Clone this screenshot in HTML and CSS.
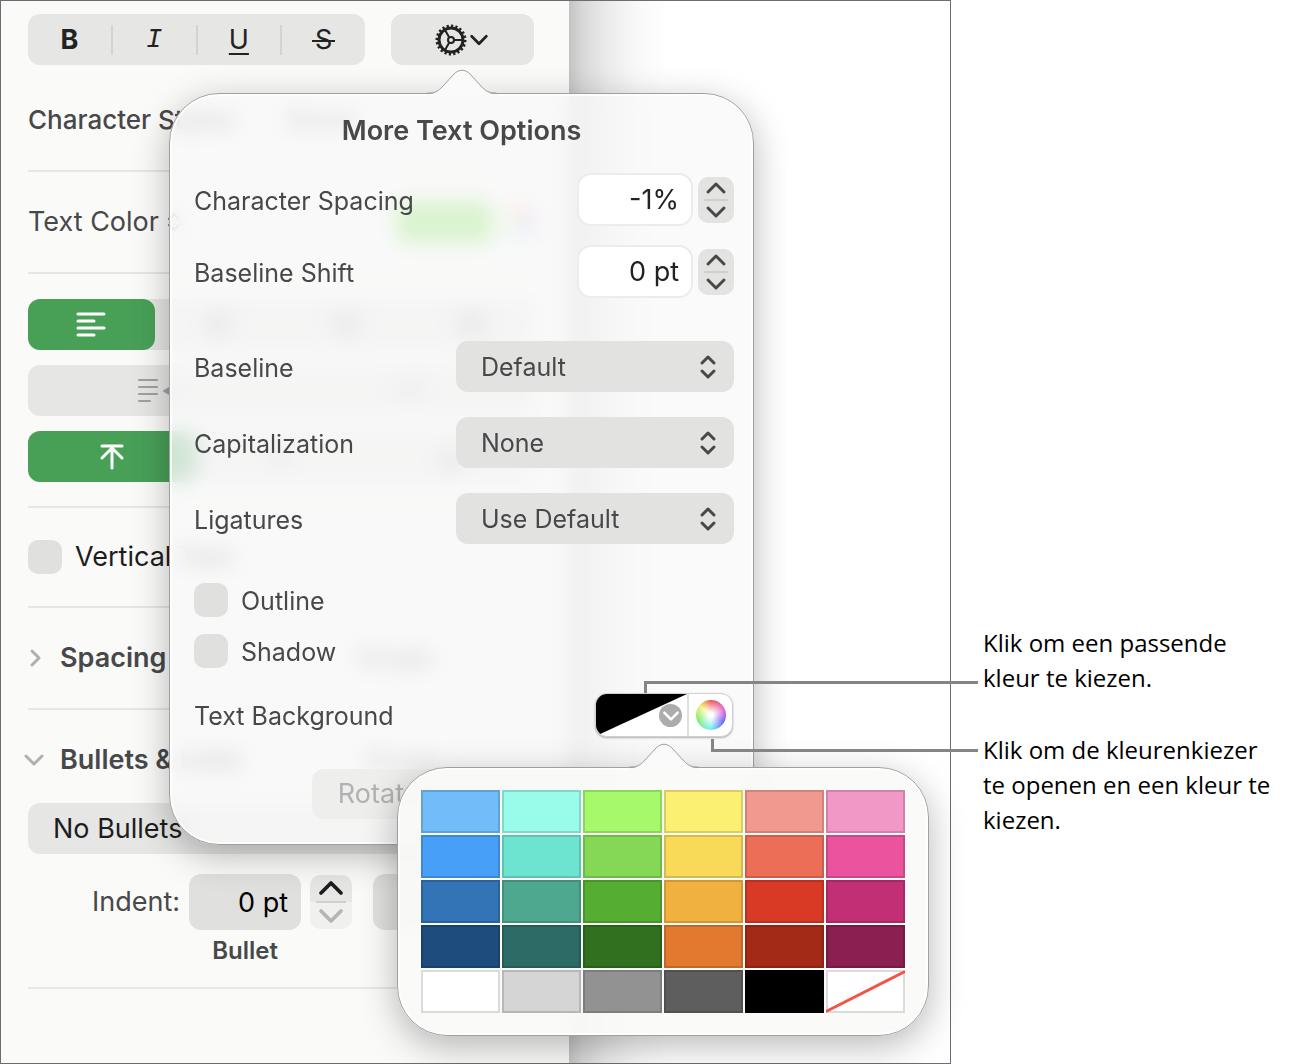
FILE: index.html
```html
<!DOCTYPE html>
<html lang="nl">
<head>
    <meta charset="UTF-8">
    <meta name="viewport" content="width=device-width, initial-scale=1.0">
    <title>More Text Options</title>
    <link rel="stylesheet" href="styles.css">
</head>
<body>
    <!-- Shared icons -->
    <svg class="sprite" aria-hidden="true">
        <symbol id="up" viewBox="0 0 24 16"><path d="M4 12 12 4 20 12"/></symbol>
        <symbol id="down" viewBox="0 0 24 16"><path d="M4 4 12 12 20 4"/></symbol>
        <symbol id="updown" viewBox="0 0 18 26"><path d="M3 9 9 3 15 9M3 17 9 23 15 17"/></symbol>
        <symbol id="tip" viewBox="0 0 72 28">
            <path class="tip-fill" d="M0 28V25H2C10 25 12 23 17 18L28 6C33 0 39 0 44 6L55 18C60 23 62 25 70 25H72V28Z"/>
            <path class="tip-line" d="M2 24C10 24 12 22 17 17L28 5C33 0 39 0 44 5L55 17C60 22 62 24 70 24"/>
        </symbol>
    </svg>

    <div class="figure">
        <main class="window">
            <!-- Format sidebar -->
            <section class="sidebar">
                <div class="toolbar">
                    <div class="segments styles">
                        <button type="button" aria-label="Bold"><b>B</b></button>
                        <button type="button" aria-label="Italic"><i>I</i></button>
                        <button type="button" aria-label="Underline"><u>U</u></button>
                        <button type="button" aria-label="Strikethrough"><span class="strike">S</span></button>
                    </div>
                    <button type="button" class="gear" aria-label="More text options">
                        <svg class="icon-gear" viewBox="0 0 32 32">
                            <circle cx="16" cy="16" r="14" stroke-width="3" pathLength="40" stroke-dasharray="1 1"/>
                            <circle cx="16" cy="16" r="12" stroke-width="3"/>
                            <circle cx="16" cy="16" r="3" stroke-width="2"/>
                            <path stroke-width="2" d="M19 16H28M14 13 10 6M14 19 10 26"/>
                        </svg>
                        <svg class="icon-chevron" viewBox="0 0 24 16"><use href="#down"/></svg>
                    </button>
                </div>

                <div class="row">
                    <label class="medium" for="charStyle">Character Styles</label>
                    <select id="charStyle" class="plain"><option>None</option></select>
                </div>

                <div class="row">
                    <span>Text Color</span>
                    <svg class="icon-small" viewBox="0 0 18 26"><use href="#updown"/></svg>
                    <button type="button" class="text-color" aria-label="Text color"></button>
                    <span class="wheel"></span>
                </div>

                <div class="groups">
                    <div class="segments">
                        <button type="button" class="active" aria-label="Align left">
                            <svg viewBox="0 0 30 28"><path d="M2 3H28M2 10H18M2 17H28M2 24H18"/></svg>
                        </button>
                        <button type="button" aria-label="Align center">
                            <svg viewBox="0 0 30 28"><path d="M2 3H28M7 10H23M2 17H28M7 24H23"/></svg>
                        </button>
                        <button type="button" aria-label="Align right">
                            <svg viewBox="0 0 30 28"><path d="M2 3H28M12 10H28M2 17H28M12 24H28"/></svg>
                        </button>
                        <button type="button" aria-label="Justify">
                            <svg viewBox="0 0 30 28"><path d="M2 3H28M2 10H28M2 17H28M2 24H28"/></svg>
                        </button>
                    </div>
                    <div class="segments dim">
                        <button type="button" aria-label="Decrease indent" disabled>
                            <svg class="wide" viewBox="0 0 36 28"><path d="M2 3H20M2 10H20M2 17H20M2 24H13"/><path class="solid" d="M27 14 34 10V18Z"/></svg>
                        </button>
                        <button type="button" aria-label="Increase indent" disabled>
                            <svg class="wide" viewBox="0 0 36 28"><path d="M16 3H34M16 10H34M16 17H34M16 24H27"/><path class="solid" d="M9 14 2 10V18Z"/></svg>
                        </button>
                    </div>
                    <div class="segments">
                        <button type="button" class="active" aria-label="Align top">
                            <svg viewBox="0 0 30 28"><path d="M5 3H25M15 25V5M5 15 15 5 25 15"/></svg>
                        </button>
                        <button type="button" aria-label="Align middle">
                            <svg viewBox="0 0 30 28"><path d="M5 14H25M15 2V10M15 26V18"/></svg>
                        </button>
                        <button type="button" aria-label="Align bottom">
                            <svg viewBox="0 0 30 28"><path d="M5 25H25M15 2V23M5 13 15 23 25 13"/></svg>
                        </button>
                    </div>
                </div>

                <div class="row check-row">
                    <input type="checkbox" id="verticalText">
                    <label class="dark" for="verticalText">Vertical Text</label>
                </div>

                <div class="row heading">
                    <svg class="disclosure" viewBox="0 0 16 24"><path d="M4 5 11 12 4 19"/></svg>
                    <h2>Spacing</h2>
                    <span class="value">Single</span>
                </div>

                <div class="bullets">
                    <div class="heading">
                        <svg class="disclosure open" viewBox="0 0 24 16"><use href="#down"/></svg>
                        <h2>Bullets &amp; Lists</h2>
                        <span class="value">None</span>
                    </div>
                    <select class="popup-select bullet-type" aria-label="Bullet type"><option>No Bullets</option></select>
                    <div class="indent">
                        <label for="bulletIndent">Indent:</label>
                        <input type="text" id="bulletIndent" value="0 pt">
                        <div class="stepper">
                            <button type="button" aria-label="Increase"><svg viewBox="0 0 24 16"><use href="#up"/></svg></button>
                            <button type="button" aria-label="Decrease" disabled><svg viewBox="0 0 24 16"><use href="#down"/></svg></button>
                        </div>
                        <input type="text" class="text-indent" aria-label="Text indent">
                        <span class="caption">Bullet</span>
                    </div>
                </div>
            </section>

            <div class="document"></div>

            <!-- More Text Options popover -->
            <section class="popover options">
                <svg class="tip" viewBox="0 0 72 28"><use href="#tip"/></svg>
                <h1>More Text Options</h1>

                <div class="fields">
                    <div class="field">
                        <label for="spacing">Character Spacing</label>
                        <input type="text" id="spacing" value="-1%">
                        <div class="stepper">
                            <button type="button" aria-label="Increase"><svg viewBox="0 0 24 16"><use href="#up"/></svg></button>
                            <button type="button" aria-label="Decrease"><svg viewBox="0 0 24 16"><use href="#down"/></svg></button>
                        </div>
                    </div>
                    <div class="field">
                        <label for="shift">Baseline Shift</label>
                        <input type="text" id="shift" value="0 pt">
                        <div class="stepper">
                            <button type="button" aria-label="Increase"><svg viewBox="0 0 24 16"><use href="#up"/></svg></button>
                            <button type="button" aria-label="Decrease"><svg viewBox="0 0 24 16"><use href="#down"/></svg></button>
                        </div>
                    </div>
                </div>

                <div class="menus">
                    <div class="field">
                        <label for="baseline">Baseline</label>
                        <div class="popup">
                            <select id="baseline" class="popup-select"><option>Default</option></select>
                            <svg viewBox="0 0 18 26"><use href="#updown"/></svg>
                        </div>
                    </div>
                    <div class="field">
                        <label for="caps">Capitalization</label>
                        <div class="popup">
                            <select id="caps" class="popup-select"><option>None</option></select>
                            <svg viewBox="0 0 18 26"><use href="#updown"/></svg>
                        </div>
                    </div>
                    <div class="field">
                        <label for="ligatures">Ligatures</label>
                        <div class="popup">
                            <select id="ligatures" class="popup-select"><option>Use Default</option></select>
                            <svg viewBox="0 0 18 26"><use href="#updown"/></svg>
                        </div>
                    </div>
                </div>

                <div class="checks">
                    <div class="check-row">
                        <input type="checkbox" id="outline">
                        <label for="outline">Outline</label>
                    </div>
                    <div class="check-row">
                        <input type="checkbox" id="shadow">
                        <label for="shadow">Shadow</label>
                    </div>
                </div>

                <div class="field">
                    <span class="label">Text Background</span>
                    <div class="well">
                        <button type="button" class="well-swatch" aria-label="Choose a matching color">
                            <svg viewBox="0 0 92 42" preserveAspectRatio="none"><path d="M0 0H92L0 42Z"/></svg>
                            <span class="well-arrow"><svg viewBox="0 0 24 16"><use href="#down"/></svg></span>
                        </button>
                        <button type="button" class="well-wheel" aria-label="Open the color picker"><span class="wheel"></span></button>
                    </div>
                </div>

                <button type="button" class="rotate" disabled>Rotate to Horizontal</button>
            </section>

            <!-- Color swatches popover -->
            <section class="popover palette">
                <svg class="tip" viewBox="0 0 72 28"><use href="#tip"/></svg>
                <div class="swatches">
                    <button type="button" class="blue-1" aria-label="Blue 1"></button>
                    <button type="button" class="teal-1" aria-label="Teal 1"></button>
                    <button type="button" class="green-1" aria-label="Green 1"></button>
                    <button type="button" class="yellow-1" aria-label="Yellow 1"></button>
                    <button type="button" class="red-1" aria-label="Red 1"></button>
                    <button type="button" class="pink-1" aria-label="Pink 1"></button>
                    <button type="button" class="blue-2" aria-label="Blue 2"></button>
                    <button type="button" class="teal-2" aria-label="Teal 2"></button>
                    <button type="button" class="green-2" aria-label="Green 2"></button>
                    <button type="button" class="yellow-2" aria-label="Yellow 2"></button>
                    <button type="button" class="red-2" aria-label="Red 2"></button>
                    <button type="button" class="pink-2" aria-label="Pink 2"></button>
                    <button type="button" class="blue-3" aria-label="Blue 3"></button>
                    <button type="button" class="teal-3" aria-label="Teal 3"></button>
                    <button type="button" class="green-3" aria-label="Green 3"></button>
                    <button type="button" class="yellow-3" aria-label="Yellow 3"></button>
                    <button type="button" class="red-3" aria-label="Red 3"></button>
                    <button type="button" class="pink-3" aria-label="Pink 3"></button>
                    <button type="button" class="blue-4" aria-label="Blue 4"></button>
                    <button type="button" class="teal-4" aria-label="Teal 4"></button>
                    <button type="button" class="green-4" aria-label="Green 4"></button>
                    <button type="button" class="yellow-4" aria-label="Yellow 4"></button>
                    <button type="button" class="red-4" aria-label="Red 4"></button>
                    <button type="button" class="pink-4" aria-label="Pink 4"></button>
                    <button type="button" class="white" aria-label="White"></button>
                    <button type="button" class="gray-1" aria-label="Light gray"></button>
                    <button type="button" class="gray-2" aria-label="Gray"></button>
                    <button type="button" class="gray-3" aria-label="Dark gray"></button>
                    <button type="button" class="black" aria-label="Black"></button>
                    <button type="button" class="white" aria-label="No color">
                        <svg viewBox="0 0 79 43" preserveAspectRatio="none"><path d="M1 41 78 2"/></svg>
                    </button>
                </div>
            </section>

            <div class="leader leader-swatch"></div>
            <div class="leader leader-wheel"></div>
        </main>

        <!-- Callouts -->
        <aside class="callouts">
            <p>Klik om een passende<br>kleur te kiezen.</p>
            <p>Klik om de kleurenkiezer<br>te openen en een kleur te<br>kiezen.</p>
        </aside>
    </div>
</body>
</html>
```
FILE: styles.css
```css
* {
    box-sizing: border-box;
}

body {
    margin: 0;
    background-color: #fff;
    font-family: Inter, "Liberation Sans", sans-serif;
    font-size: 27px;
    line-height: 32px;
    color: #48484a;
}

button, input, select {
    font: inherit;
    color: inherit;
    margin: 0;
    padding: 0;
    border: none;
    background: none;
}

select, input {
    appearance: none;
}

h1, h2, p {
    margin: 0;
    font-size: inherit;
}

h1, h2 {
    font-weight: 600;
}

svg {
    fill: none;
    stroke: currentColor;
    stroke-width: 3;
    stroke-linecap: round;
    stroke-linejoin: round;
}

.sprite {
    display: none;
}

.figure {
    display: grid;
    grid-template-columns: minmax(0, 1fr) 352px;
    min-height: 100vh;
}

.window {
    position: relative;
    display: flex;
    border: 1px solid #6e6b73;
}

/* Sidebar */
.sidebar {
    flex: 0 0 568px;
    padding: 13px 35px 0 27px;
    background-color: #fafaf9;
}

.document {
    flex: 1;
    background: linear-gradient(to right, #c4c4c4, #d8d8d8 14px, #ebebeb 38px, #f9f9f9 68px, #fff 100px);
}

.toolbar {
    display: flex;
    gap: 26px;
    margin-bottom: 5px;
    color: #222;
}

.segments {
    display: flex;
    height: 51px;
    border-radius: 12px;
    background-color: #e6e6e5;
}

.segments button {
    flex: 1;
    display: flex;
    align-items: center;
    justify-content: center;
    border-radius: 12px;
}

.segments svg {
    width: 30px;
    height: 28px;
    stroke-width: 2;
}

.segments .wide {
    width: 36px;
}

.segments .solid {
    fill: currentColor;
}

.segments .active {
    background-color: #48a057;
    color: #fff;
}

.segments .active svg {
    stroke-width: 3;
}

.dim {
    color: #a0a0a0;
}

.styles {
    flex: 1;
    align-items: center;
}

.styles button {
    height: 30px;
    border-radius: 0;
}

.styles button + button {
    border-left: 2px solid #d3d3d2;
}

.styles i {
    font-family: "Liberation Mono", monospace;
}

.styles u {
    text-underline-offset: 4px;
    text-decoration-thickness: 2px;
}

.strike {
    position: relative;
}

.strike::after {
    content: "";
    position: absolute;
    left: -3px;
    right: -3px;
    top: 50%;
    height: 2px;
    background-color: #222;
}

.gear {
    display: flex;
    align-items: center;
    justify-content: center;
    gap: 1px;
    width: 143px;
    border-radius: 12px;
    background-color: #e6e6e5;
}

.icon-gear {
    width: 32px;
    height: 32px;
    stroke-linecap: butt;
}

.icon-chevron {
    width: 22px;
    height: 16px;
}

.row {
    display: flex;
    align-items: center;
    height: 102px;
    border-bottom: 2px solid #e6e6e5;
}

.medium {
    font-size: 26px;
    font-weight: 500;
}

.dark {
    color: #1d1d1f;
}

.plain {
    margin-left: 52px;
}

.icon-small {
    width: 14px;
    height: 20px;
    margin-left: 8px;
}

.text-color {
    width: 96px;
    height: 42px;
    margin-left: auto;
    margin-right: 12px;
    border-radius: 10px;
    background-color: #6be03c;
}

.wheel {
    flex: none;
    width: 30px;
    height: 30px;
    border-radius: 50%;
    background:
        radial-gradient(circle, #fff 10%, rgba(255, 255, 255, 0) 75%),
        conic-gradient(#e8473f, #e64fd0 65deg, #5b50ee 120deg, #5ff0f5 180deg, #6fe95c 250deg, #f4ee58 310deg, #e8473f);
}

.groups {
    display: grid;
    gap: 15px;
    padding: 25px 0 24px;
    border-bottom: 2px solid #e6e6e5;
}

.check-row {
    display: flex;
    align-items: center;
    gap: 13px;
}

.check-row.row {
    height: 100px;
}

.check-row input {
    width: 34px;
    height: 34px;
    border-radius: 10px;
    background-color: #e0e0df;
}

.heading {
    display: flex;
    align-items: center;
}

.disclosure {
    width: 16px;
    height: 24px;
    margin-right: 16px;
    color: #b0b0b0;
}

.disclosure.open {
    width: 24px;
    height: 16px;
    margin-left: -6px;
    margin-right: 14px;
}

.value {
    margin-left: auto;
    margin-right: 100px;
}

.bullets {
    padding: 34px 0 20px;
    border-bottom: 2px solid #e6e6e5;
}

.popup-select {
    display: block;
    width: 100%;
    height: 51px;
    padding: 0 25px;
    border-radius: 12px;
    background-color: #e2e2e1;
}

.bullet-type {
    margin: 27px 0 20px;
    background-color: #e6e6e5;
    color: #1d1d1f;
}

.indent {
    display: grid;
    grid-template-columns: 152px 112px 42px 112px;
    gap: 5px 9px;
    align-items: center;
}

.indent label {
    text-align: right;
}

.indent input {
    height: 56px;
    padding-right: 13px;
    border-radius: 12px;
    background-color: #e0e0df;
    color: #000;
    text-align: right;
}

.indent .text-indent {
    margin-left: 12px;
}

.caption {
    grid-column: 2;
    font-size: 24px;
    font-weight: 600;
    text-align: center;
}

/* Steppers */
.stepper {
    display: flex;
    flex-direction: column;
    height: 46px;
    padding: 0 6px;
    border-radius: 10px;
    background-color: #e3e3e2;
}

.stepper button {
    flex: 1;
    display: flex;
    align-items: center;
    justify-content: center;
}

.stepper button + button {
    border-top: 2px solid #cfcfce;
}

.stepper button svg {
    width: 24px;
    height: 16px;
}

.indent .stepper {
    height: 54px;
    color: #1d1d1f;
    background: linear-gradient(#e6e6e5 50%, #f0f0ef 50%);
}

.indent .stepper svg {
    width: 30px;
    height: 20px;
}

.indent .stepper button:disabled {
    color: #b5b5b5;
}

/* Popovers */
.popover {
    position: absolute;
    border: 1px solid #a0a0a0;
    border-radius: 50px;
    background-color: rgba(249, 249, 248, 0.78);
    backdrop-filter: blur(10px);
    box-shadow: inset 0 0 0 2px rgba(255, 255, 255, 0.8), 0 10px 36px rgba(0, 0, 0, 0.28);
}

.tip {
    position: absolute;
    width: 72px;
    height: 28px;
    top: -25px;
    stroke: none;
}

.tip-fill {
    fill: #fafafa;
    stroke: none;
}

.tip-line {
    stroke: #a0a0a0;
    stroke-width: 1;
}

.options {
    left: 168px;
    top: 92px;
    width: 585px;
    padding: 21px 19px 25px 24px;
    font-size: 25px;
}

.options .tip {
    left: 256px;
}

.options h1 {
    margin: 0 5px 26px 0;
    font-size: 27px;
    text-align: center;
}

.field {
    display: flex;
    align-items: center;
}

.field label, .field .label {
    flex: 1;
    padding-top: 2px;
}

.fields {
    display: grid;
    gap: 19px;
    margin-bottom: 43px;
}

.fields input {
    width: 116px;
    height: 53px;
    margin-right: 5px;
    padding-right: 12px;
    border: 2px solid #ececeb;
    border-radius: 14px;
    background-color: #fff;
    color: #222;
    font-size: 27px;
    text-align: right;
}

.fields .stepper {
    width: 36px;
}

.menus {
    display: grid;
    gap: 25px;
    margin-bottom: 39px;
}

.popup {
    position: relative;
    width: 278px;
}

.popup svg {
    position: absolute;
    right: 17px;
    top: 13px;
    width: 18px;
    height: 26px;
    pointer-events: none;
}

.checks {
    display: grid;
    gap: 17px;
    margin-bottom: 25px;
}

.checks label {
    padding-top: 2px;
}

/* Color well */
.well {
    display: flex;
    width: 138px;
    height: 44px;
    margin-right: 1px;
    border: 1px solid #d0d0d0;
    border-radius: 12px;
    background-color: #fff;
    box-shadow: 0 1px 2px rgba(0, 0, 0, 0.3);
    overflow: hidden;
}

.well-swatch {
    position: relative;
    flex: 1;
    border-right: 2px solid #e0e0e0;
}

.well-swatch > svg {
    display: block;
    width: 100%;
    height: 100%;
    fill: #000;
    stroke: none;
}

.well-arrow {
    position: absolute;
    right: 5px;
    top: 10px;
    display: flex;
    align-items: center;
    justify-content: center;
    width: 23px;
    height: 23px;
    border-radius: 50%;
    background-color: #acacac;
    color: #fff;
}

.well-arrow svg {
    width: 20px;
    height: 14px;
}

.well-wheel {
    display: flex;
    align-items: center;
    justify-content: center;
    width: 43px;
}

.rotate {
    display: block;
    height: 50px;
    margin: 32px auto 0;
    padding: 0 26px;
    border-radius: 12px;
    background-color: #eeeeed;
    color: #b2b2b2;
    font-size: 27px;
}

/* Palette */
.palette {
    left: 396px;
    top: 766px;
    padding: 22px 23px;
    background-color: rgba(250, 250, 249, 0.92);
}

.palette .tip {
    left: 230px;
}

.swatches {
    display: grid;
    grid-template-columns: repeat(6, 79px);
    grid-auto-rows: 43px;
    gap: 2px;
}

.swatches button {
    box-shadow: inset 0 0 0 2px rgba(0, 0, 0, 0.14);
}

.swatches svg {
    display: block;
    width: 100%;
    height: 100%;
    stroke: #f05545;
}

.blue-1 { background-color: #72bdf9; }
.blue-2 { background-color: #479ff8; }
.blue-3 { background-color: #3274b5; }
.blue-4 { background-color: #1e4c7c; }
.teal-1 { background-color: #99fbea; }
.teal-2 { background-color: #6de4d0; }
.teal-3 { background-color: #4da88f; }
.teal-4 { background-color: #2d6b66; }
.green-1 { background-color: #a5f96b; }
.green-2 { background-color: #84d855; }
.green-3 { background-color: #55ae32; }
.green-4 { background-color: #30701e; }
.yellow-1 { background-color: #fcf073; }
.yellow-2 { background-color: #f8da58; }
.yellow-3 { background-color: #f1b13e; }
.yellow-4 { background-color: #e1792e; }
.red-1 { background-color: #f2998f; }
.red-2 { background-color: #ed6e57; }
.red-3 { background-color: #d93a26; }
.red-4 { background-color: #a32a17; }
.pink-1 { background-color: #f198c6; }
.pink-2 { background-color: #eb539e; }
.pink-3 { background-color: #c32f75; }
.pink-4 { background-color: #8a1f51; }
.white { background-color: #fff; }
.gray-1 { background-color: #d5d5d5; }
.gray-2 { background-color: #929292; }
.gray-3 { background-color: #5e5e5e; }
.black { background-color: #000; }

/* Leader lines run from the color well to the callouts */
.leader {
    position: absolute;
    right: -28px;
    height: 12px;
    border: 0 solid #858585;
    border-left-width: 3px;
}

.leader-swatch {
    left: 643px;
    top: 680px;
    border-top-width: 3px;
}

.leader-wheel {
    left: 710px;
    top: 738px;
    height: 13px;
    border-bottom-width: 3px;
}

/* Callouts */
.callouts {
    padding: 625px 0 0 32px;
    font-family: "Open Sans", "Noto Sans", sans-serif;
    font-size: 24px;
    line-height: 35px;
    color: #000;
}

.callouts p + p {
    margin-top: 37px;
}
```
